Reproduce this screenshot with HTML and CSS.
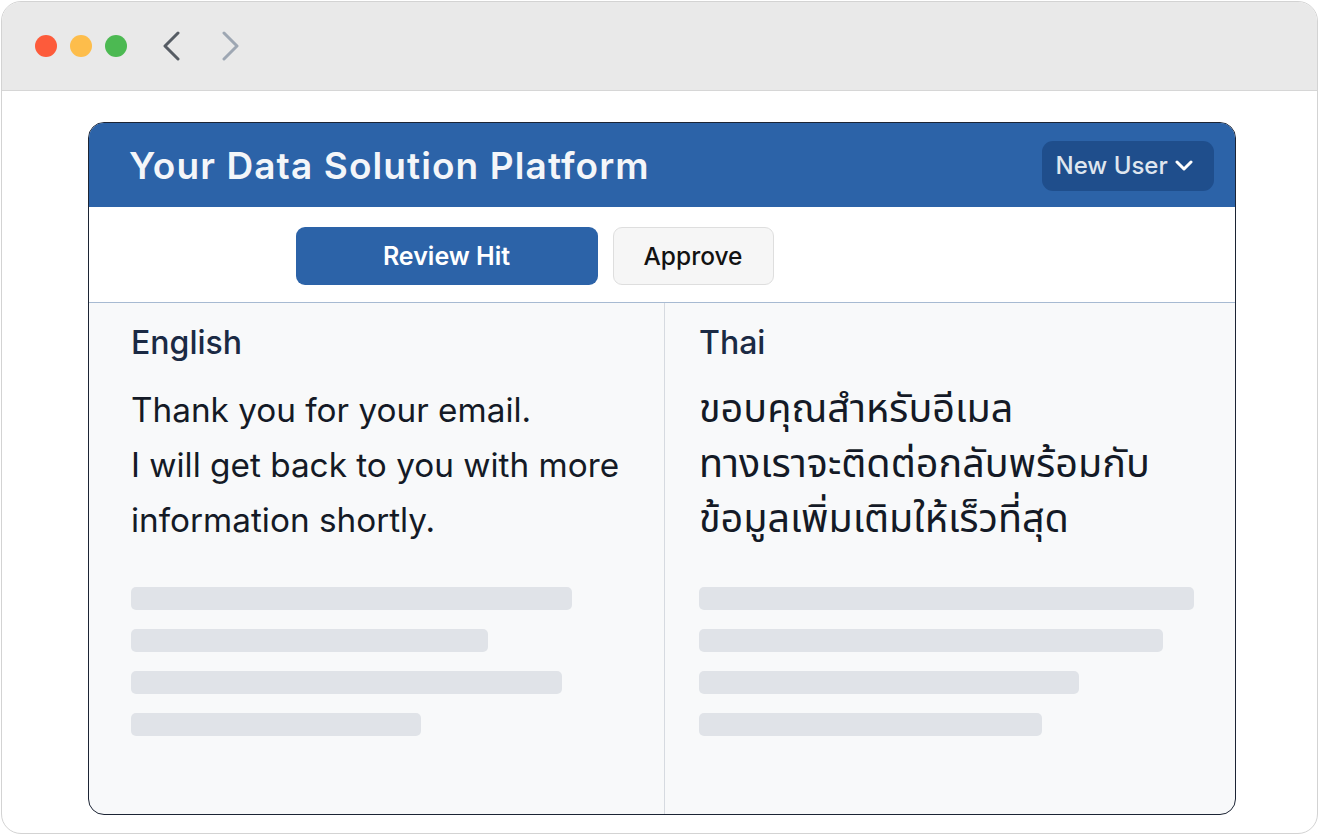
FILE: index.html
```html
<!DOCTYPE html>
<html lang="en">
<head>
<meta charset="utf-8">
<title>Your Data Solution Platform</title>
<link rel="stylesheet" href="styles.css">
</head>
<body>
<div class="window">
  <div class="titlebar">
    <span class="light red"></span>
    <span class="light yellow"></span>
    <span class="light green"></span>
    <svg class="nav back" width="18" height="30" viewBox="0 0 18 30"><polyline points="15,2 2,15 15,28" fill="none" stroke="#565c64" stroke-width="3" stroke-linecap="round" stroke-linejoin="round"/></svg>
    <svg class="nav fwd" width="18" height="30" viewBox="0 0 18 30"><polyline points="3,2 16,15 3,28" fill="none" stroke="#9ea7b3" stroke-width="3" stroke-linecap="round" stroke-linejoin="round"/></svg>
  </div>
  <div class="content">
    <div class="card">
      <div class="card-header">
        <h1 class="title">Your Data Solution Platform</h1>
        <button class="user-btn">New User
          <svg width="18" height="11" viewBox="0 0 18 11"><polyline points="2,2 9,9 16,2" fill="none" stroke="#ffffff" stroke-width="3" stroke-linecap="round" stroke-linejoin="round"/></svg>
        </button>
      </div>
      <div class="toolbar">
        <button class="btn btn-primary">Review Hit</button>
        <button class="btn btn-secondary">Approve</button>
      </div>
      <div class="columns">
        <div class="col col-left">
          <h2 class="lang">English</h2>
          <div class="text">
            <div>Thank you for your email.</div>
            <div>I will get back to you with more</div>
            <div>information shortly.</div>
          </div>
          <div class="bars">
            <div class="bar" style="width:441px"></div>
            <div class="bar" style="width:357px"></div>
            <div class="bar" style="width:431px"></div>
            <div class="bar" style="width:290px"></div>
          </div>
        </div>
        <div class="col col-right">
          <h2 class="lang">Thai</h2>
          <div class="text thai">
            <div>ขอบคุณสำหรับอีเมล</div>
            <div>ทางเราจะติดต่อกลับพร้อมกับ</div>
            <div>ข้อมูลเพิ่มเติมให้เร็วที่สุด</div>
          </div>
          <div class="bars">
            <div class="bar" style="width:495px"></div>
            <div class="bar" style="width:464px"></div>
            <div class="bar" style="width:380px"></div>
            <div class="bar" style="width:343px"></div>
          </div>
        </div>
      </div>
    </div>
  </div>
</div>
</body>
</html>
```
FILE: styles.css
```css
* { box-sizing: border-box; }
html, body { margin: 0; padding: 0; background: #ffffff; }
body {
  font-family: Inter, "Noto Sans", "DejaVu Sans", sans-serif;
  padding: 1px;
}
.window {
  width: 1317px;
  height: 833px;
  border: 1px solid #d3d3d3;
  border-radius: 20px;
  overflow: hidden;
  background: #ffffff;
  display: flex;
  flex-direction: column;
}
.titlebar {
  height: 89px;
  flex: none;
  background: #e9e9e9;
  border-bottom: 1px solid #d6d6d6;
  display: flex;
  align-items: center;
  padding-left: 33px;
  padding-bottom: 1px;
}
.light {
  width: 22px;
  height: 22px;
  border-radius: 50%;
  margin-right: 13px;
}
.red { background: #fd5b3b; }
.yellow { background: #fdbd4b; }
.green { background: #4cb952; }
.nav { display: block; }
.back { margin-left: 23px; }
.fwd { margin-left: 40px; }

.content {
  flex: 1;
  padding: 31px 0 0 86px;
}
.card {
  width: 1148px;
  height: 693px;
  border: 1.5px solid #1c2434;
  border-radius: 16px;
  overflow: hidden;
  display: flex;
  flex-direction: column;
  background: #f8f9fa;
}
.card-header {
  height: 83.5px;
  flex: none;
  background: #2c63a8;
  display: flex;
  align-items: center;
  justify-content: space-between;
  padding: 0 21.5px 0 40px;
}
.title {
  margin: 0;
  color: #f4f6f9;
  font-family: Inter, "Open Sans", sans-serif;
  font-size: 37px;
  font-weight: 600;
  letter-spacing: 1.1px;
  padding-top: 2px;
}
.user-btn {
  height: 50px;
  width: 172px;
  border: none;
  border-radius: 11px;
  background: #1f4e8c;
  color: #dfe6ef;
  font-family: Inter, sans-serif;
  font-size: 24px;
  font-weight: 500;
  display: flex;
  align-items: center;
  gap: 7px;
  padding: 0 0 0 14px;
  margin-top: 2px;
}
.toolbar {
  height: 96px;
  flex: none;
  background: #ffffff;
  border-bottom: 1px solid #a7bad2;
  display: flex;
  align-items: center;
  padding-left: 206.5px;
  padding-top: 3px;
  gap: 15px;
}
.btn {
  height: 58px;
  border-radius: 9px;
  font-family: Inter, sans-serif;
  font-size: 25px;
  font-weight: 600;
}
.btn-primary {
  width: 302px;
  background: #2c63a8;
  color: #ffffff;
  border: none;
}
.btn-secondary {
  width: 161px;
  background: #f6f6f6;
  color: #121212;
  border: 1px solid #dedede;
  font-size: 24.5px;
  font-weight: 500;
}
.columns {
  flex: 1;
  display: grid;
  grid-template-columns: 575px 1fr;
}
.col {
  padding-top: 21px;
}
.col-left { padding-left: 42px; }
.col-right {
  padding-left: 34px;
  border-left: 1px solid #d6dae0;
}
.lang {
  margin: 0;
  font-size: 32px;
  line-height: 38px;
  font-weight: 500;
  color: #1b2a44;
}
.text {
  margin-top: 21px;
  font-size: 33.3px;
  line-height: 55px;
  color: #141a26;
}
.thai {
  font-family: "Noto Sans Thai", "Noto Sans Thai Looped", Inter, "Noto Sans", sans-serif;
  font-size: 39.5px;
}
.bars {
  margin-top: 39px;
  display: flex;
  flex-direction: column;
  gap: 19px;
}
.bar {
  height: 23px;
  border-radius: 5px;
  background: #e0e3e8;
}
```
